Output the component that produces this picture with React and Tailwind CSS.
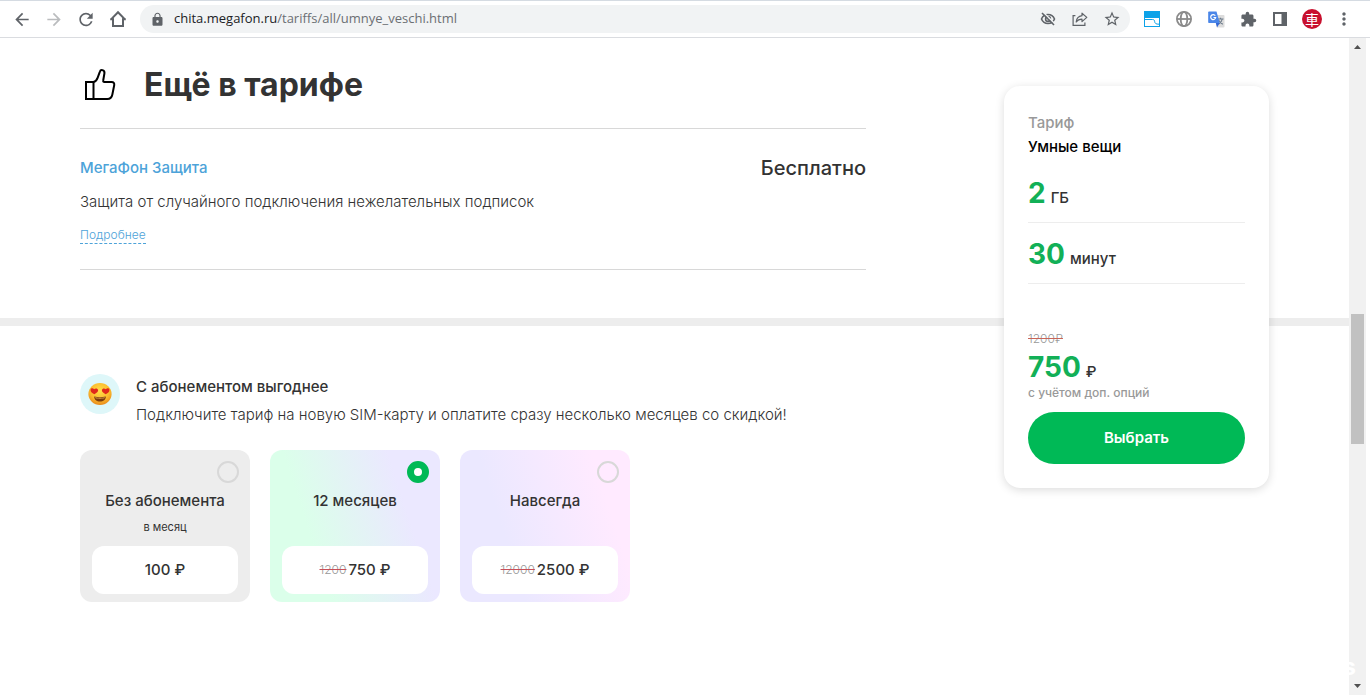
import React, { useState } from "react";
import {
  MdArrowBack,
  MdArrowForward,
  MdRefresh,
  MdLock,
  MdStarOutline,
  MdExtension,
  MdMoreVert,
} from "react-icons/md";

const plans = [
  {
    id: "none",
    title: "Без абонемента",
    note: "в месяц",
    price: "100 ₽",
    bg: "bg-[#ededed]",
  },
  {
    id: "year",
    title: "12 месяцев",
    oldPrice: "1200",
    price: "750 ₽",
    bg: "bg-[linear-gradient(72deg,#dbffea_28%,#ebe8ff_76%)]",
  },
  {
    id: "forever",
    title: "Навсегда",
    oldPrice: "12000",
    price: "2500 ₽",
    bg: "bg-[linear-gradient(72deg,#ebe8ff_30%,#ffeaff_82%)]",
  },
];

function HomeIcon() {
  return (
    <svg width="18" height="18" viewBox="0 0 18 18" fill="none" stroke="currentColor" strokeWidth="2">
      <path d="M1.8 9.6 9 2.2l7.2 7.4M4 8.2V16h10V8.2M1.2 9.3H4.6M13.4 9.3h3.4" />
    </svg>
  );
}

function EyeOffIcon() {
  return (
    <svg width="16" height="16" viewBox="0 0 16 16" fill="none" stroke="currentColor" strokeWidth="1.6">
      <path d="M1.500 8C2.700 5 5.200 3.500 8 3.500S13.300 5 14.500 8c-1.200 3-3.700 4.500-6.500 4.500S2.700 11 1.500 8z" />
      <circle cx="8" cy="8" r="2.400" />
      <path d="M3.200 1.200 15 13" stroke="#f1f3f4" />
      <path d="M2 2l12 12" />
    </svg>
  );
}

function ShareIcon() {
  return (
    <svg width="16" height="16" viewBox="0 0 16 16" fill="none" stroke="currentColor" strokeWidth="1.2">
      <path d="M3.4 4.6H1.1v9.8h11.8v-3" />
      <path d="M10 2.2 14.8 6.4 10 10.6V8.2C7.4 8.2 5.6 9 4.2 11c.3-3.600 2.400-5.800 5.800-6.300z" strokeLinejoin="round" />
    </svg>
  );
}

function WindowIcon() {
  return (
    <svg width="16" height="16" viewBox="0 0 16 16">
      <path d="M0 0h16v16H0z" fill="#0da2e8" />
      <path d="M1 7h14v8H1z" fill="#fff" />
      <path d="M1 8.500h7.500c1.500 0 2 .6 2.200 2.200.2 1.800 1.300 2.500 4.300 2.500" fill="none" stroke="#0da2e8" />
    </svg>
  );
}

function GlobeIcon() {
  return (
    <svg width="16" height="16" viewBox="0 0 16 16" fill="none" stroke="#8b8b8b" strokeWidth="1.8">
      <circle cx="8" cy="8" r="7.100" />
      <ellipse cx="8" cy="8" rx="3.300" ry="7.100" />
      <path d="M1 8h14" />
    </svg>
  );
}

function TranslateIcon() {
  return (
    <svg width="17" height="17" viewBox="0 0 17 17" fill="none">
      <path d="M6 4h9.500q1 0 1 1v10.500q0 1-1 1H9z" fill="#dcdcdc" />
      <path d="M9.500 8h6M12.500 6.800V8M14.300 8c-.5 2.500-2 4.300-3.800 5.300M11 9.500c.7 1.500 2.100 3 3.800 3.800" stroke="#6c7a89" strokeWidth="1.100" />
      <path d="M1 .5h7.500l3.200 11.600H1q-.8 0-.8-.8V1.300Q.2.500 1 .5z" fill="#4a86e8" />
      <path d="M9 16.500 7.800 12.100h3.900z" fill="#3367d6" />
      <path d="M7.300 4.700A2.500 2.500 0 1 0 7.700 6.500H5.500" stroke="#fff" strokeWidth="1.200" />
    </svg>
  );
}

function SidePanelIcon() {
  return (
    <svg width="14" height="14" viewBox="0 0 14 14">
      <path d="M0 0h14v14H0zM2 2v10h6.500V2z" fill="#5f6368" fillRule="evenodd" />
    </svg>
  );
}

function ThumbIcon() {
  return (
    <svg
      width="40"
      height="40"
      viewBox="0 0 40 40"
      fill="none"
      stroke="#000"
      strokeWidth="2"
      aria-hidden="true"
    >
      <path d="M6 17h7.500v17H6z" />
      <path
        d="M13.500 17c2.300-.5 3.300-2 4.200-4.400l2.100-5.800c.5-1.500 1.500-2 2.600-1.700 1.600.4 2.300 1.700 2 3.400L23.200 15.500c-.2 1 .2 1.500 1.200 1.500h7.200c2 0 3 1.300 2.600 3.200l-1.900 9.600c-.6 2.900-2 4.200-4.900 4.200H13.500"
        strokeLinejoin="round"
      />
    </svg>
  );
}

function HeartEyes() {
  return (
    <svg width="24" height="24" viewBox="0 0 24 24" aria-hidden="true">
      <defs>
        <radialGradient id="face" cx="50%" cy="35%" r="65%">
          <stop offset="0" stopColor="#ffdf4a" />
          <stop offset="0.65" stopColor="#fbb92c" />
          <stop offset="1" stopColor="#e88a1c" />
        </radialGradient>
      </defs>
      <ellipse cx="12" cy="12" rx="11.600" ry="11" fill="url(#face)" />
      <path d="M6.300 12.200C3.800 11 2.300 9.400 2.600 7.700c.3-1.600 2.500-1.900 3.500-.4 1.300-1.400 3.700-1 4 .8.300 1.700-1.500 3.200-3.800 4.100z" fill="#e0281c" />
      <path d="M17.700 12.200c2.500-1.200 4-2.800 3.700-4.500-.3-1.600-2.500-1.900-3.500-.4-1.300-1.400-3.700-1-4 .8-.3 1.700 1.500 3.200 3.800 4.100z" fill="#e0281c" />
      <path d="M6.200 14.500c3.800 1 7.800 1 11.600 0 .2 3-2.500 5-5.800 5s-6-2-5.800-5z" fill="#7a3c0c" />
      <path d="M7 15.200c3.300.7 6.700.7 10 0-.3 1-1 1.300-2 1.400-2 .2-4 .2-6 0-1-.1-1.700-.4-2-1.400z" fill="#d9a050" />
    </svg>
  );
}

function BrowserBar() {
  return (
    <header className="flex h-[38px] shrink-0 items-center border-t border-b border-t-[#d5dbe2] border-b-[#dadce0] bg-white pr-4 text-[#5f6368]">
      <nav className="flex items-center gap-3 pl-3">
        <button aria-label="Назад" className="flex size-5 items-center justify-center"><MdArrowBack size={21} /></button>
        <button aria-label="Вперёд" className="flex size-5 items-center justify-center text-[#babcbe]"><MdArrowForward size={21} /></button>
        <button aria-label="Обновить" className="flex size-5 items-center justify-center"><MdRefresh size={21} /></button>
        <button aria-label="Домой" className="flex size-5 items-center justify-center"><HomeIcon /></button>
      </nav>
      <div className="ml-3 flex h-7 flex-1 items-center rounded-full bg-[#f1f3f4] pr-2 pl-[10px]">
        <MdLock size={15} />
        <span className="ml-[9px] flex-1 font-['Open_Sans',sans-serif] text-[13px] text-[#6b6f73]">
          <span className="text-[#202124]">chita.megafon.ru</span>/tariffs/all/umnye_veschi.html
        </span>
        <div className="flex items-center gap-3">
          <button aria-label="Cookie заблокированы" className="flex size-5 items-center justify-center"><EyeOffIcon /></button>
          <button aria-label="Поделиться" className="flex size-5 items-center justify-center"><ShareIcon /></button>
          <button aria-label="В закладки" className="flex size-5 items-center justify-center"><MdStarOutline size={18} /></button>
        </div>
      </div>
      <div className="ml-3 flex items-center gap-3">
        <button aria-label="Окна" className="flex size-5 items-center justify-center"><WindowIcon /></button>
        <button aria-label="Сеть" className="flex size-5 items-center justify-center"><GlobeIcon /></button>
        <button aria-label="Переводчик" className="flex size-5 items-center justify-center"><TranslateIcon /></button>
        <button aria-label="Расширения" className="flex size-5 items-center justify-center"><MdExtension size={17} /></button>
        <button aria-label="Боковая панель" className="flex size-5 items-center justify-center"><SidePanelIcon /></button>
        <button className="flex size-5 items-center justify-center rounded-full bg-[#c8102e] font-['Noto_Sans_CJK_JP',sans-serif] text-sm leading-none text-white">車</button>
        <button aria-label="Меню" className="flex size-5 items-center justify-center"><MdMoreVert size={20} /></button>
      </div>
    </header>
  );
}

function Plan({ plan, checked, onSelect }) {
  return (
    <label className={`flex h-[152px] w-[170px] cursor-pointer flex-col rounded-xl px-3 pb-2 pt-[11px] text-center ${plan.bg}`}>
      <input
        type="radio"
        name="plan"
        value={plan.id}
        checked={checked}
        onChange={() => onSelect(plan.id)}
        className="-mr-px size-[22px] shrink-0 appearance-none self-end rounded-full border-2 border-[#d8d8d8] checked:border-[7px] checked:border-[#00b956] checked:bg-white"
      />
      <span className="mt-2 text-[15px] leading-5 font-medium">{plan.title}</span>
      <span className="mt-1 text-[11px] leading-6">{plan.note}</span>
      <span className="mt-auto flex h-12 items-center justify-center gap-[2px] rounded-xl bg-white">
        {plan.oldPrice && (
          <s className="text-xs font-light text-[#999] decoration-[#c8505a]">{plan.oldPrice}</s>
        )}
        <span className="text-[15px] font-medium">{plan.price}</span>
      </span>
    </label>
  );
}

function Amount({ value, unit }) {
  return (
    <p className="flex items-baseline gap-[5px]">
      <span className="text-[28px] leading-9 font-bold text-[#12b057]">{value}</span>
      <span className="text-[15px] leading-none font-medium">{unit}</span>
    </p>
  );
}

function TariffCard() {
  return (
    <aside className="absolute top-12 right-20 w-[265px] rounded-2xl bg-white px-6 pt-[25px] pb-6 shadow-[0_2px_10px_rgba(0,0,0,0.14)]">
      <p className="text-[15px] leading-6 font-medium text-[#999]">Тариф</p>
      <h2 className="text-[15px] leading-6 font-medium text-black">Умные вещи</h2>
      <div className="mt-4 border-b border-[#ededed] pb-[11px]">
        <Amount value="2" unit="ГБ" />
      </div>
      <div className="mt-[13px] border-b border-[#ededed] pb-[11px]">
        <Amount value="30" unit="минут" />
      </div>
      <p className="mt-[45px] text-xs leading-5 font-light text-[#999]">
        <s className="decoration-[#c86458]">1200₽</s>
      </p>
      <Amount value="750" unit="₽" />
      <p className="text-[12px] leading-4 font-medium text-[#999]">с учётом доп. опций</p>
      <button className="mt-[11px] h-[52px] w-full rounded-full bg-[#00b956] text-[15px] font-semibold text-white">
        Выбрать
      </button>
    </aside>
  );
}

function Scrollbar() {
  return (
    <div className="mr-1 flex w-[17px] shrink-0 flex-col items-center bg-[#f1f1f1]">
      <svg width="17" height="17" viewBox="0 0 17 17"><path d="M5 11h7L8.500 7z" fill="#505050" /></svg>
      <div className="flex-[259]" />
      <div className="w-[13px] flex-[130] bg-[#c1c1c1]" />
      <div className="flex-[234]" />
      <svg width="17" height="17" viewBox="0 0 17 17"><path d="M5 6h7l-3.500 4z" fill="#505050" /></svg>
    </div>
  );
}

export default function App() {
  const [plan, setPlan] = useState("year");

  return (
    <div className="relative flex min-h-screen flex-col bg-white font-[Inter,sans-serif] text-[#333]">
      <BrowserBar />
      <div className="flex flex-1">
        <main className="relative min-w-0 flex-1">
          <section className="border-b-8 border-[#ededed] pt-[22px] pr-[483px] pb-12 pl-20">
            <div className="flex h-[50px] items-center gap-6">
              <ThumbIcon />
              <h1 className="text-[32px] leading-10 font-bold">Ещё в тарифе</h1>
            </div>
            <div className="mt-[18px] border-t border-b border-[#d8d8d8] pt-[27px] pb-[25px]">
              <div className="flex items-center justify-between">
                <a href="#defence" className="text-[15px] leading-6 font-medium text-[#4da3d9]">МегаФон Защита</a>
                <span className="text-xl leading-6 font-medium">Бесплатно</span>
              </div>
              <p className="mt-[10px] text-[15px] leading-6 font-light">
                Защита от случайного подключения нежелательных подписок
              </p>
              <div className="mt-[13px] flex">
                <a href="#more" className="border-b border-dashed border-[#4da3d9] text-xs leading-4 font-light text-[#4da3d9]">
                  Подробнее
                </a>
              </div>
            </div>
          </section>

          <section className="pt-12 pl-20">
            <div className="flex gap-4">
              <div className="flex size-10 items-center justify-center rounded-full bg-[#def7f9]">
                <HeartEyes />
              </div>
              <div className="pt-px">
                <h2 className="text-[15px] leading-6 font-medium">С абонементом выгоднее</h2>
                <p className="mt-1 text-[15px] leading-6 font-light">
                  Подключите тариф на новую SIM-карту и оплатите сразу несколько месяцев со скидкой!
                </p>
              </div>
            </div>
            <div className="mt-[23px] flex gap-5">
              {plans.map((p) => (
                <Plan key={p.id} plan={p} checked={plan === p.id} onSelect={setPlan} />
              ))}
            </div>
          </section>

          <TariffCard />
        </main>
        <Scrollbar />
      </div>
      <span className="absolute right-[14px] bottom-3 text-2xl leading-8 font-bold text-white">s</span>
    </div>
  );
}
